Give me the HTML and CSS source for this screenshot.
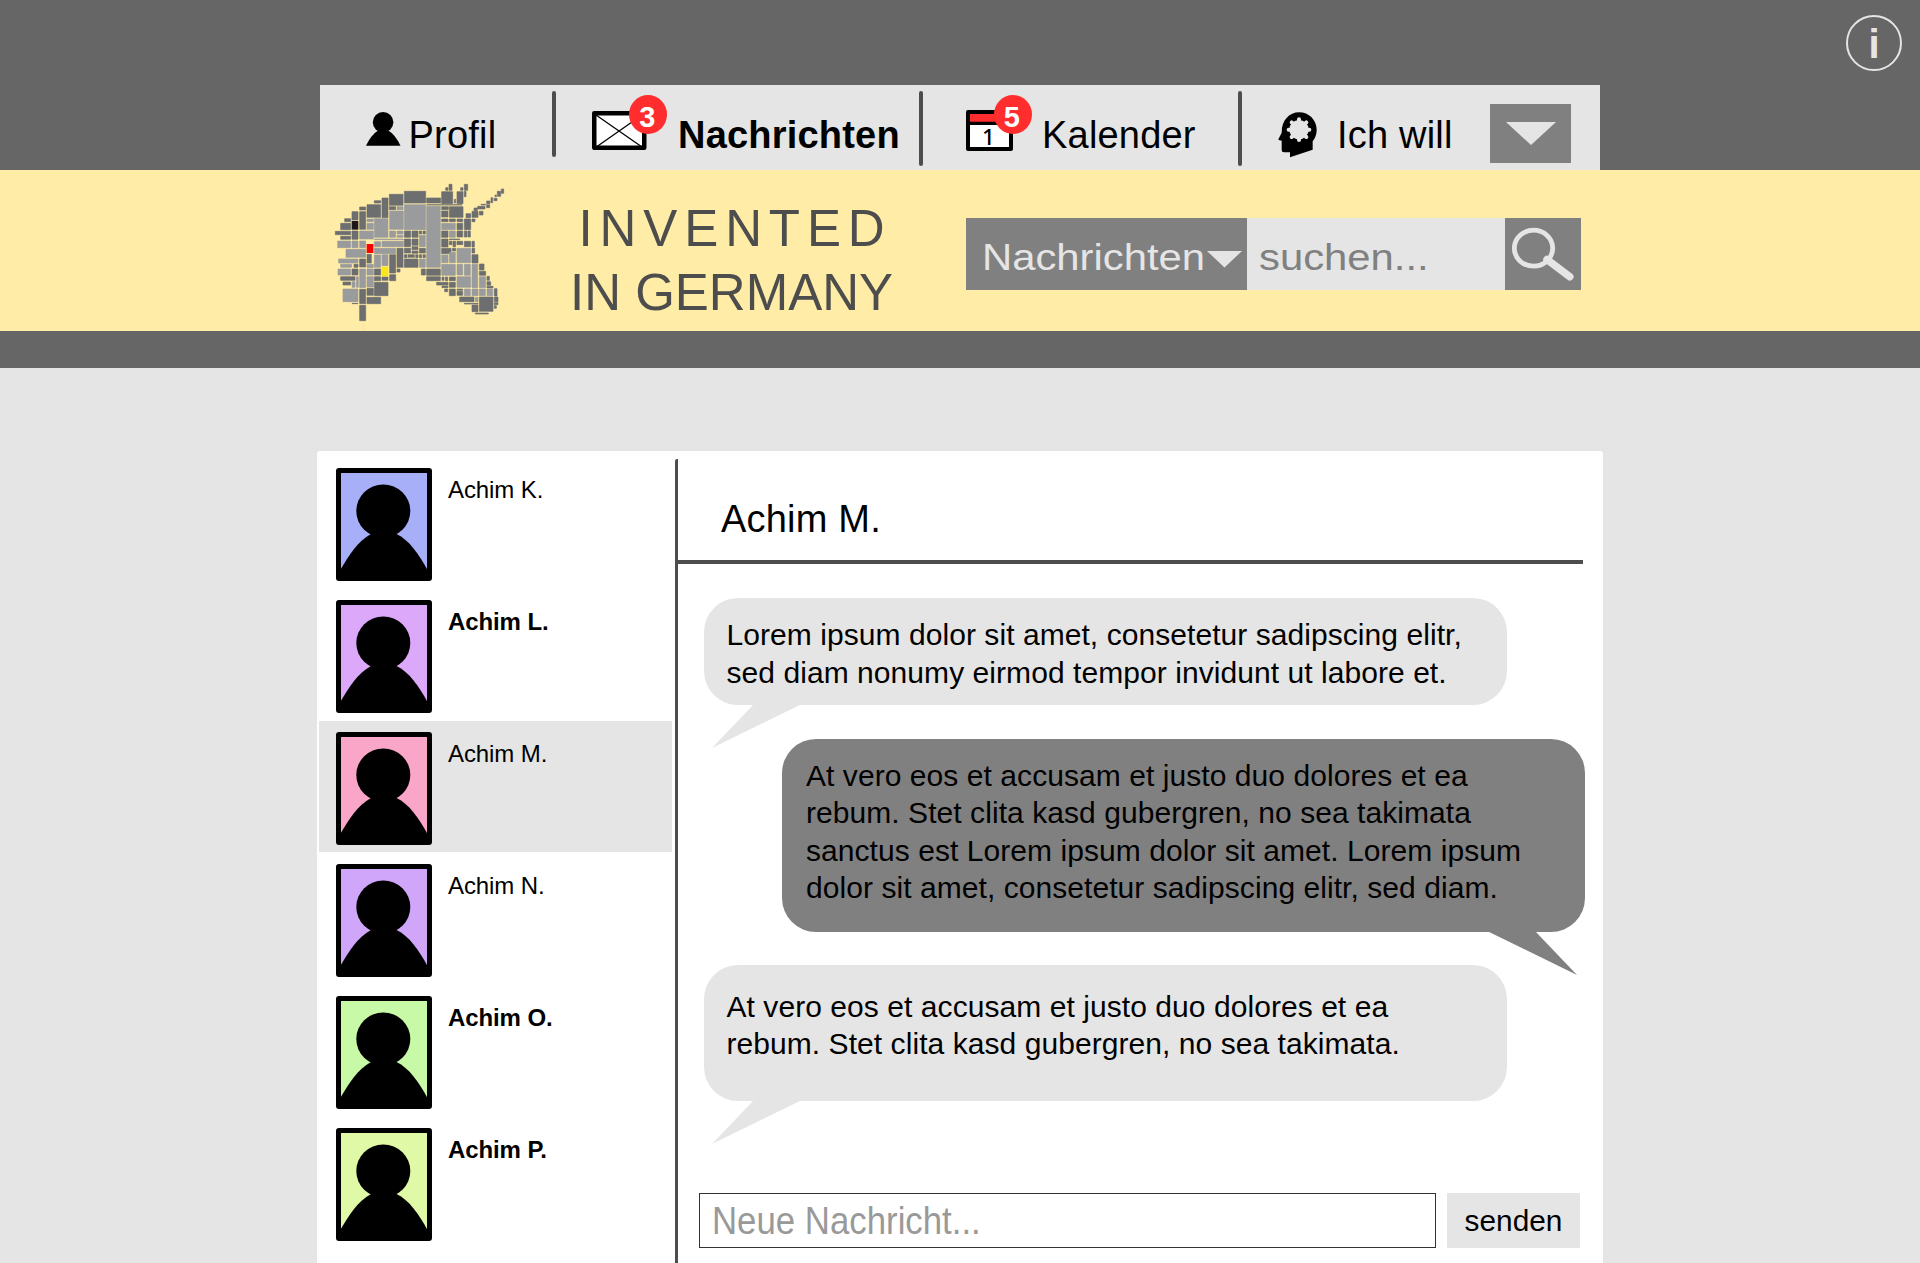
FILE: index.html
```html
<!DOCTYPE html>
<html lang="de">
<head>
<meta charset="utf-8">
<title>Invented in Germany – Nachrichten</title>
<link rel="stylesheet" href="styles.css">
</head>
<body>
<svg width="0" height="0" class="defs">
  <symbol id="person" viewBox="0 0 86 103" overflow="visible">
    <ellipse cx="42.3" cy="38" rx="27" ry="26.5"/>
    <path d="M-1 97.500C8 82 17 68 30 61H55.500C68 67 78 81 87 98V104H-1z"/>
  </symbol>
</svg>
<header class="top">
  <nav class="nav">
    <a class="item profil">
      <svg class="ico-person" viewBox="0 0 104 104"><circle cx="51.500" cy="31" r="31"/><path d="M0 102Q15 70 36 56H67Q88 68 104 102z"/></svg>
      <span>Profil</span>
    </a>
    <i class="sep short"></i>
    <a class="item mail">
      <span class="ico">
        <svg class="ico-mail" viewBox="0 0 54.500 39"><rect x="2.250" y="2.250" width="50" height="34.500" fill="#fff" stroke="#000" stroke-width="4.500" stroke-linejoin="round"/><path d="M4 4L50 36M5 35.500L50 4" stroke="#000" stroke-width="1.300"/></svg>
        <b class="badge">3</b>
      </span>
      <b>Nachrichten</b>
    </a>
    <i class="sep"></i>
    <a class="item cal">
      <span class="ico">
        <svg class="ico-cal" viewBox="0 0 47 41"><rect x="2" y="2" width="43" height="37" fill="#fff" stroke="#000" stroke-width="4" stroke-linejoin="round"/><path d="M4 4H43V12H4z" fill="#ff2d2d"/><path d="M4 11.700H43V15H4z"/></svg>
        <span class="day">1</span>
        <b class="badge">5</b>
      </span>
      <span>Kalender</span>
    </a>
    <i class="sep"></i>
    <a class="item will">
      <svg class="ico-head" viewBox="145 110 120 138">
        <path d="M208 111C238 111 261 134 261 164C261 178 256 189 249 198V223L181 246V231H163Q156 231 156 224V196L147 194Q145 192 148 188L156 172C156 134 180 111 208 111z"/>
        <circle cx="208" cy="163" r="29" fill="#e5e5e5"/>
        <g stroke="#e5e5e5" stroke-width="12" stroke-linecap="round"><path d="M208 132V194M177 163H239M186 141L230 185M230 141L186 185"/></g>
      </svg>
      <span>Ich will</span>
    </a>
    <button class="more"><svg viewBox="0 0 50 23"><path d="M0 0H50L25 23z"/></svg></button>
  </nav>
  <a class="info">i</a>
</header>
<section class="brand">
  <svg class="logo" viewBox="0 0 570 480">
    <g stroke-width="2" stroke-linejoin="round">
    <path fill="#6d6e70" stroke="#6d6e70" d="M529 42h7v13h-7zM517 49h10v15h-10zM510 60h4v5h-4zM507 70h9v7h-9zM498 68h5v15h-5zM485 78h10v8h-10zM485 89h9v9h-9zM468 88h14v2h-14zM458 94h22v8h-22zM447 99h10v8h-10zM441 109h18v18h-18zM463 109h11v11h-11z
    M372 28h9v18h-9zM362 38h7v8h-7zM350 50h33v36h-33zM388 73h4v11h-4zM418 28h10v18h-10zM407 38h7v8h-7zM396 50h18v36h-18zM418 49h5v16h-5z
    M305 69h42v15h-42zM305 89h106v1h-106zM238 49h64v35h-64zM193 58h41v33h-41zM171 69h18v59h-18zM148 77h19v7h-19zM126 89h41v38h-41zM104 96h18v9h-18zM104 110h18v53h-18zM81 110h18v25h-18zM59 131h18v9h-18zM47 145h30v19h-30zM81 168h18v25h-18zM31 169h46v10h-46zM47 184h30v9h-30zM193 95h19v9h-19z
    M350 95h20v9h-20zM350 108h19v18h-19zM373 95h41v32h-41zM350 132h19v8h-19zM373 132h18v8h-18zM396 132h17v8h-17zM423 116h14v12h-14zM441 132h9v8h-9zM418 132h19v32h-19zM396 145h17v19h-17zM396 168h17v18h-17zM418 168h8v18h-8zM429 168h7v18h-7zM418 199h19v16h-19zM441 199h7v17h-7zM441 220h8v14h-8zM441 239h18v25h-18z
    M350 168h19v19h-19zM350 192h19v24h-19zM350 220h28v16h-28zM373 199h8v10h-8zM384 199h8v16h-8zM373 192h31v2h-31zM396 199h17v10h-17zM382 220h10v8h-10z
    M238 168h19v19h-19zM261 168h18v19h-18zM238 192h19v23h-19zM261 192h18v19h-18zM283 168h7v9h-7zM294 168h7v9h-7zM261 215h18v9h-18zM238 220h19v14h-19zM283 220h18v14h-18zM261 228h18v7h-18zM238 239h8v9h-8zM249 239h19v8h-19zM272 239h7v9h-7zM283 239h7v9h-7zM294 239h7v9h-7zM238 252h41v25h-41zM216 220h18v57h-18zM216 282h9v9h-9zM194 239h18v55h-18zM194 299h18v18h-18z
    M289 282h12v18h-12zM305 282h41v19h-41zM305 305h41v12h-41zM335 322h34v8h-34zM351 306h6v10h-6zM361 306h7v11h-7zM373 306h18v11h-18zM351 333h18v5h-18zM359 342h9v8h-9zM373 342h18v20h-18zM396 349h17v12h-17zM373 322h18v15h-18zM396 342h17v4h-17z
    M404 366h43v14h-43zM441 390h18v20h-18zM463 366h41v43h-41zM508 341h8v22h-8zM508 366h11v14h-11zM508 383h11v6h-11zM508 392h6v8h-6zM451 414h39v3h-39zM463 267h14v18h-14zM463 289h19v12h-19zM486 304h7v12h-7zM486 320h11v11h-11zM486 334h18v5h-18zM418 385h41v2h-41z
    M126 238h13v26h-13zM104 252h18v24h-18zM87 268h12v9h-12zM81 282h18v18h-18zM47 305h43v11h-43zM54 321h23v9h-23zM104 343h18v43h-18zM104 391h18v46h-18zM148 282h19v18h-19zM148 305h19v12h-19zM171 306h18v10h-18zM126 340h19v21h-19zM126 367h41v19h-41zM148 322h41v40h-41zM81 385h18v1h-18z"/>
    <path fill="#9a9b9d" stroke="#9a9b9d" d="M238 89h64v75h-64zM194 108h41v55h-41zM216 95h18v9h-18zM148 131h41v56h-41zM126 145h19v18h-19zM126 132h19v8h-19zM104 168h41v24h-41zM194 168h18v19h-18zM216 168h18v9h-18zM216 181h18v6h-18zM148 192h87v2h-87zM38 198h39v20h-39zM81 198h18v20h-18zM104 198h18v20h-18zM148 200h19v15h-19zM171 199h64v16h-64zM63 223h59v24h-59zM148 220h64v16h-64z
    M41 252h58v12h-58zM47 268h33v9h-33zM39 282h38v18h-38zM148 240h19v37h-19zM171 239h18v33h-18zM104 282h18v56h-18zM126 268h19v10h-19zM126 282h19v18h-19zM126 305h19v31h-19zM81 320h9v17h-9zM94 305h6v32h-6zM54 342h45v38h-45z
    M305 94h41v183h-41zM283 181h18v34h-18zM283 252h18v25h-18zM350 145h41v19h-41zM373 168h18v19h-18zM396 220h41v43h-41zM350 268h41v33h-41zM396 305h41v32h-41zM350 240h19v23h-19zM373 232h18v31h-18zM396 268h17v32h-17zM418 268h18v33h-18zM441 268h17v70h-17zM463 305h19v33h-19zM418 342h18v20h-18zM441 342h18v20h-18zM463 342h18v20h-18zM486 342h17v20h-17zM451 367h8v13h-8z"/>
    </g>
    <path fill="#1d181a" d="M80 138h20v26h-20z"/><path fill="#fe0000" d="M125 207h20v27h-20z"/><path fill="#f9e71c" d="M170 275h20v29h-20z"/>
    <path stroke="#e0cf93" d="M115 445V467"/>
  </svg>
  <h1 class="title"><span class="wide">INVENTED</span><span>IN GERMANY</span></h1>
  <form class="search">
    <div class="scope"><span class="stretch">Nachrichten</span><svg class="caret" viewBox="0 0 35 16.500"><path d="M0 0H35L17.500 16.500z"/></svg></div>
    <div class="query"><span class="stretch">suchen...</span></div>
    <div class="go"><svg viewBox="0 0 76 72.500"><ellipse cx="28.500" cy="30.200" rx="19.200" ry="18" fill="none" stroke="#e5e5e5" stroke-width="4.800"/><path d="M42 41.500L64.800 58.700" stroke="#e5e5e5" stroke-width="7.500" stroke-linecap="round"/></svg></div>
  </form>
</section>
<div class="band"></div>
<main class="panel">
  <ul class="contacts">
    <li><span class="avatar blue"><svg><use href="#person"/></svg></span><span class="name">Achim K.</span></li>
    <li class="unread"><span class="avatar violet"><svg><use href="#person"/></svg></span><span class="name">Achim L.</span></li>
    <li class="active"><span class="avatar pink"><svg><use href="#person"/></svg></span><span class="name">Achim M.</span></li>
    <li><span class="avatar purple"><svg><use href="#person"/></svg></span><span class="name">Achim N.</span></li>
    <li class="unread"><span class="avatar green"><svg><use href="#person"/></svg></span><span class="name">Achim O.</span></li>
    <li class="unread"><span class="avatar lime"><svg><use href="#person"/></svg></span><span class="name">Achim P.</span></li>
  </ul>
  <section class="chat">
    <h2>Achim M.</h2>
    <div class="messages">
      <div class="msg in first">Lorem ipsum dolor sit amet, consetetur sadipscing elitr,<br>sed diam nonumy eirmod tempor invidunt ut labore et.<svg class="tail" viewBox="0 0 90 44"><path d="M42 0L0 44L90 0z"/></svg></div>
      <div class="msg out">At vero eos et accusam et justo duo dolores et ea<br>rebum. Stet clita kasd gubergren, no sea takimata<br>sanctus est Lorem ipsum dolor sit amet. Lorem ipsum<br>dolor sit amet, consetetur sadipscing elitr, sed diam.<svg class="tail" viewBox="0 0 90 44"><path d="M0 0L90 44L48 0z"/></svg></div>
      <div class="msg in last">At vero eos et accusam et justo duo dolores et ea<br>rebum. Stet clita kasd gubergren, no sea takimata.<svg class="tail" viewBox="0 0 90 44"><path d="M42 0L0 44L90 0z"/></svg></div>
    </div>
    <div class="compose">
      <div class="field"><span>Neue Nachricht...</span></div>
      <button class="send">senden</button>
    </div>
  </section>
</main>
</body>
</html>
```
FILE: styles.css
```css
* { box-sizing: border-box; }
body {
  margin: 0;
  width: 1920px;
  height: 1263px;
  overflow: hidden;
  background: #e5e5e5;
  color: #000;
  font-family: "Liberation Sans", Arial, sans-serif;
}
svg { display: block; flex: none; }
.defs { position: absolute; }
h1, h2, ul { margin: 0; padding: 0; font-weight: 400; list-style: none; }
button { border: 0; padding: 0; font-family: inherit; }

.top {
  height: 170px;
  background: #666;
  display: flex;
  justify-content: space-between;
  padding: 15px 18px 0 320px;
}
.nav {
  display: flex;
  width: 1280px;
  height: 85px;
  margin-top: 70px;
  background: #e5e5e5;
  font-size: 38px;
  line-height: 45px;
  letter-spacing: 0.2px;
  white-space: nowrap;
}
.item { display: flex; align-items: flex-start; padding-top: 28px; }
.profil { width: 232px; padding-left: 46px; }
.mail { width: 363px; padding-left: 36px; }
.cal { width: 315px; padding-left: 43px; }
.will { width: 248px; padding-left: 36px; }
.sep { width: 4px; height: 75px; margin-top: 6px; border-radius: 2px; background: #4d4d4d; }
.sep.short { height: 66px; }
.ico-person { width: 34.5px; height: 34.5px; margin: -1px 8px 0 0; }
.ico { position: relative; flex: none; }
.mail .ico { width: 86px; margin-top: -2px; }
.cal .ico { width: 76px; margin-top: -3px; }
.ico-mail { width: 54.500px; height: 39px; }
.ico-cal { width: 47px; height: 41px; }
.ico-head { width: 40px; height: 46px; margin: -1px 19px 0 0; }
.badge {
  position: absolute;
  left: 37px;
  top: -16px;
  width: 38px;
  height: 39px;
  border-radius: 50%;
  background: #ff2d2d;
  color: #fff;
  font-size: 29px;
  line-height: 45px;
  text-align: center;
  text-indent: -1px;
}
.cal .badge { left: 27.5px; top: -15px; }
.day {
  position: absolute;
  left: 16px;
  top: 15px;
  font: 500 22.5px/24px "Noto Sans", sans-serif;
}
.more {
  width: 81px;
  height: 59px;
  margin-top: 19px;
  padding: 18px 15.500px;
  background: #808080;
}
.more svg { width: 50px; height: 23px; fill: #e5e5e5; }
.info {
  width: 56px;
  height: 56px;
  border: 2.700px solid #e5e5e5;
  border-radius: 50%;
  color: #e5e5e5;
  font-weight: 700;
  font-size: 40px;
  line-height: 54px;
  text-align: center;
}

.brand {
  height: 161px;
  background: #ffeca6;
  display: flex;
  padding-left: 325px;
}
.logo { width: 190px; height: 160px; margin-top: 5px; }
.title {
  width: 400px;
  margin-left: 35px;
  padding-top: 27px;
  display: flex;
  flex-direction: column;
  align-items: flex-start;
  font-size: 51px;
  line-height: 63.500px;
  padding-left: 20px;
  color: #4d4d4d;
  white-space: nowrap;
}
.title .wide { letter-spacing: 6.900px; margin-left: 8.500px; }
.title span { display: block; }
.search { display: flex; margin-top: 47.500px; margin-left: 16px; height: 72.500px; font-size: 37.500px; line-height: 79px; }
.stretch { display: inline-block; transform: scaleX(1.115); transform-origin: 0 50%; white-space: nowrap; }
.scope { width: 281px; padding-left: 16px; background: #808080; color: #e5e5e5; display: flex; }
.scope .stretch { width: 224.500px; }
.caret { width: 35px; height: 16.500px; margin-top: 33.500px; fill: #e5e5e5; }
.query { width: 258px; padding-left: 12px; background: #e5e5e5; color: #808080; }
.go { width: 76px; background: #808080; }
.go svg { width: 76px; height: 72.500px; }
.band { height: 37px; background: #666; }

.panel {
  display: flex;
  width: 1286px;
  height: 812px;
  margin: 83px 0 0 317px;
  background: #fff;
  border-radius: 3px 3px 0 0;
}
.contacts { width: 358px; padding: 6px 3px 0 2px; }
.contacts li { display: flex; height: 131px; margin-bottom: 1px; padding: 11px 0 0 17px; }
.contacts .active { background: #e5e5e5; }
.avatar { width: 96px; height: 113px; border: 5px solid #000; border-radius: 3px; }
.avatar svg { width: 86px; height: 103px; overflow: visible; }
.blue { background: #a6aff8; }
.violet { background: #dca8fa; }
.pink { background: #f9a6c8; }
.purple { background: #d0a6fa; }
.green { background: #c8f9a6; }
.lime { background: #e0f9a6; }
.name { margin: 8px 0 0 16px; font-size: 24px; line-height: 28px; letter-spacing: -0.1px; }
.unread .name { font-weight: 700; }

.chat {
  flex: 1;
  margin-top: 8px;
  border-left: 3.500px solid #4d4d4d;
  border-top-left-radius: 2px;
  display: flex;
  flex-direction: column;
}
.chat h2 {
  width: 905px;
  height: 105px;
  padding: 38px 0 0 43px;
  border-bottom: 4px solid #4d4d4d;
  font-size: 38px;
  line-height: 44px;
  letter-spacing: 0.2px;
}
.messages { display: flex; flex-direction: column; padding: 34px 0 0 26px; height: 629px; }
.msg {
  position: relative;
  width: 803px;
  border-radius: 34px;
  padding: 18px 0 0 22.500px;
  font-size: 30px;
  line-height: 37.600px;
  letter-spacing: 0.060px;
  white-space: nowrap;
}
.in { background: #e5e5e5; fill: #e5e5e5; }
.first { height: 106.500px; }
.out { height: 193px; margin: 34px 0 0 78px; padding-left: 24px; background: #808080; fill: #808080; }
.last { height: 135.500px; margin-top: 33.500px; padding-top: 22.500px; }
.tail { position: absolute; top: calc(100% - 0.500px); left: 8px; width: 90px; height: 44px; }
.out .tail { left: 705px; }
.compose { display: flex; gap: 11px; padding-left: 21px; }
.field {
  width: 737px;
  height: 55px;
  border: 1.500px solid #333;
  padding-left: 12px;
  color: #999;
  font-size: 39px;
  line-height: 54px;
}
.field span { display: inline-block; transform: scaleX(0.892); transform-origin: 0 50%; white-space: nowrap; }
.send { width: 133px; height: 55px; background: #e5e5e5; color: #000; font-size: 29.800px; line-height: 55px; }
```
